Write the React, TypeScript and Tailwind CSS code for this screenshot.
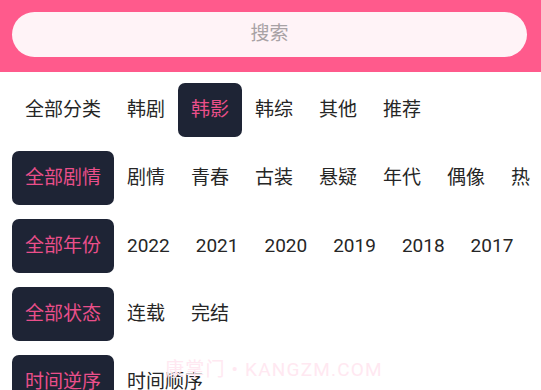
import React from 'react';

type Row = { items: string[]; active: number };

const rows: Row[] = [
  { items: ['全部分类', '韩剧', '韩影', '韩综', '其他', '推荐'], active: 2 },
  { items: ['全部剧情', '剧情', '青春', '古装', '悬疑', '年代', '偶像', '热'], active: 0 },
  { items: ['全部年份', '2022', '2021', '2020', '2019', '2018', '2017'], active: 0 },
  { items: ['全部状态', '连载', '完结'], active: 0 },
  { items: ['时间逆序', '时间顺序'], active: 0 },
];

const font = { fontFamily: 'Roboto, "Noto Sans CJK SC", sans-serif' };

export default function App() {
  return (
    <div className="relative w-[541px] h-[390px] overflow-hidden bg-white" style={font}>
      <div className="bg-[#ff5a8c] h-[72px] px-3 pt-3">
        <div className="h-[45px] w-[515px] rounded-full bg-[#fff3f7] flex items-center justify-center text-[19px] text-[#a8a2a5]">
          搜索
        </div>
      </div>

      <div className="flex flex-col gap-[14px] pt-[11px] px-3">
        {rows.map((row, ri) => (
          <div key={ri} className="flex flex-nowrap whitespace-nowrap">
            {row.items.map((it, i) => (
              <div
                key={it}
                className={
                  'h-[54px] px-[13px] flex items-center text-[19px] rounded-[7px] shrink-0 ' +
                  (i === row.active ? 'bg-[#1e2435] text-[#ea4f8a]' : 'text-[#262626]')
                }
              >
                {it}
              </div>
            ))}
          </div>
        ))}
      </div>

      {/* watermark */}
      <div className="absolute left-[165px] top-[356px] text-[19px] text-[#ffe8f1] tracking-[1.2px] pointer-events-none">
        康掌门 • KANGZM.COM
      </div>
    </div>
  );
}
